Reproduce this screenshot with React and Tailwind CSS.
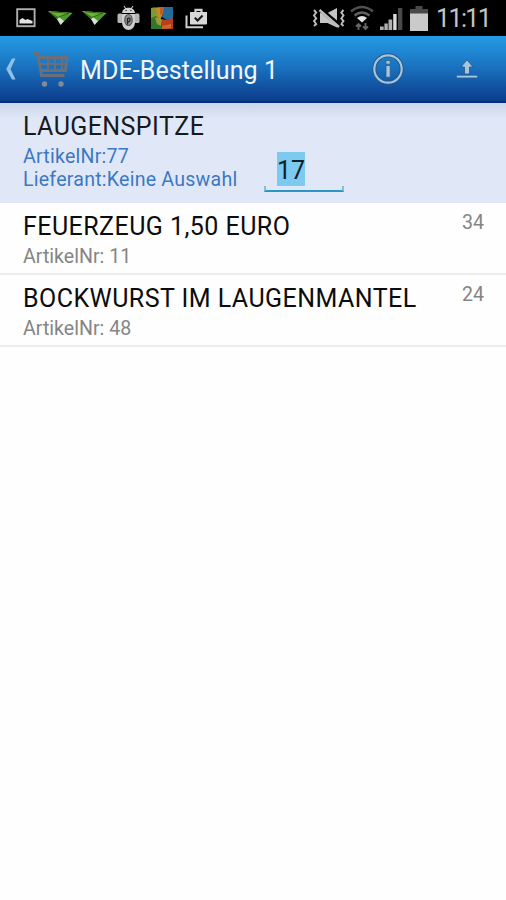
// src/App.jsx
import React, { useState } from 'react';

const ARTICLES = [
  { id: 77, name: 'LAUGENSPITZE', supplier: 'Keine Auswahl', amount: 17 },
  { id: 11, name: 'FEUERZEUG 1,50 EURO', amount: 34 },
  { id: 48, name: 'BOCKWURST IM LAUGENMANTEL', amount: 24 },
];

// --- Status bar icons ---
const ScreenshotIcon = () => (
  <svg width="20" height="20" viewBox="0 0 20 20">
    <rect x="1.2" y="1.2" width="17.4" height="17" fill="none" stroke="#b0b0b0" strokeWidth="1.9" />
    <path d="M3.500 15.500V12l3-2 3 2 2-1 5 2v2.500z" fill="#e2e2e2" />
  </svg>
);

const PlaneIcon = () => (
  <svg width="25" height="16" viewBox="0 0 25 16">
    <path d="M0 1 24.500 3 13 14.500 9.500 9.500z" fill="#4f9a2b" />
    <path d="M0 1 24.500 3 10 7z" fill="#69b336" />
    <path d="M0 1 10 7 9.500 9.500z" fill="#35731c" />
    <path d="m9 9 2.500-1.500 4.500 3.500-3.500 4z" fill="#d9dfd5" />
    <path d="M3 1.800 21 3.300 10.500 7" fill="none" stroke="#255414" strokeWidth=".8" />
  </svg>
);

const AndroidIcon = () => (
  <svg width="23" height="26" viewBox="0 0 23 26">
    <path d="m7 1 2 3m7-3-2 3" stroke="#bdbdbd" strokeWidth="1.200" />
    <path d="M5 8C5.500 1 17.500 1 18 8z" fill="#d0d0d0" />
    <rect x=".5" y="8.500" width="5" height="9.500" rx="1.500" fill="#b5b5b5" />
    <rect x="17.500" y="8.500" width="5" height="9.500" rx="1.500" fill="#b5b5b5" />
    <path d="M5 9h13v9q-1 7-6.500 7T5 18z" fill="#cdcdcd" />
    <ellipse cx="11.500" cy="15" rx="3.700" ry="5.500" fill="#8d8d8d" stroke="#555" strokeWidth="1.200" />
    <path d="M10.500 19.500v-6q3-1 2.500 1.500t-2.500 1.500" fill="none" stroke="#222" strokeWidth="1.200" />
    <path d="M8.500 5.500h1.200m3.600 0h1.200" stroke="#222" strokeWidth="1.200" />
  </svg>
);

const ShieldTileIcon = () => (
  <svg width="24" height="24" viewBox="0 0 24 24">
    <path d="M1 2 11 1l2 7-3 6-9-2z" fill="#c78a25" />
    <path d="m1 2 4-.5L8 8l-4 4-3-2z" fill="#7f9a35" />
    <path d="M13 1h10v12l-6 1-5-3 1-4z" fill="#236d9a" />
    <path d="m10 1 4 0-1 7-3 1z" fill="#c65a25" />
    <path d="m1 12 5-2 6 4-1 9H1z" fill="#35762f" />
    <path d="m5 12 4-1 3 3-1 6-4-2z" fill="#9a9d33" />
    <path d="m12 13 5 1 6-2v11H11z" fill="#ba3d20" />
    <path d="m12 20 9-2v4l-9 1z" fill="#cf6a26" />
  </svg>
);

const BagIcon = () => (
  <svg width="23" height="21" viewBox="0 0 23 21">
    <path d="M1.500 7.500v11.700H18" fill="none" stroke="#cfcfcf" strokeWidth="2" />
    <path d="M10.500 4V1.800h6V4" fill="none" stroke="#cfcfcf" strokeWidth="2.200" />
    <path d="M5 4h17v11.500q0 1-1 1H6q-1 0-1-1z" fill="#d8d8d8" />
    <path d="m9.800 9.800 2.800 2.700 5-5" fill="none" stroke="#171717" strokeWidth="2" />
  </svg>
);

const MuteIcon = () => (
  <svg width="34" height="20" viewBox="0 0 34 20" fill="none" stroke="#bdbdbd">
    <path d="m2 2 2.200 2.500L2 7.500l2.200 3L2 13l2.200 3-2.200 2" strokeWidth="1.900" />
    <path d="m31.500 2-2.200 2.500 2.200 3-2.200 3 2.200 2.500-2.200 3 2.200 2" strokeWidth="1.900" />
    <path d="M8 5h7.500L25 0v19.500L15.500 15H8z" fill="#c4c4c4" stroke="none" />
    <path d="m8.500 1.500 19 16" stroke="#000" strokeWidth="4.400" />
    <path d="m7.500 2 19.500 17" strokeWidth="2.400" />
  </svg>
);

const WifiIcon = () => (
  <svg width="24" height="26" viewBox="0 0 24 26" fill="none">
    <path d="M1 6.500q11-9 22 0" stroke="#505050" strokeWidth="2.600" />
    <path d="M4.500 10.500q7.500-6 15 0" stroke="#606060" strokeWidth="2.400" />
    <path d="M7 13q5-4 10 0L12 17.500z" fill="#e3e3e3" />
    <path d="M8.500 25v-6m-2.500 2.500L8.500 19l2.500 2.500M15.500 18v6m-2.500-2.500 2.500 2.500 2.500-2.500" stroke="#666" strokeWidth="1.900" />
  </svg>
);

const SignalIcon = () => (
  <svg width="24" height="23" viewBox="0 0 24 23">
    <path d="M1 18.500h3.700V22H1zM5.400 15.500h3.400V22H5.400zM9.500 11.500h3.700V22H9.500z" fill="#b0b0b0" />
    <path d="M14.200 6h3.400v16h-3.400z" fill="#dadada" />
    <path d="M19 0h4.300v22H19z" fill="#494949" />
  </svg>
);

const BatteryIcon = () => (
  <svg width="18" height="27" viewBox="0 0 18 27">
    <path d="M5.500 1h7v3H18v5H0V4h5.500z" fill="#494949" />
    <path d="M0 8.500h18V26H0z" fill="#cacaca" />
  </svg>
);

// --- Action bar icons ---
const BackIcon = () => (
  <svg width="12" height="22" viewBox="0 0 12 22">
    <path d="M7 .5h3.500L5.500 11l5 10.500H7L1.200 11z" fill="#8fc0e8" />
  </svg>
);

const CartIcon = () => (
  <svg width="36" height="36" viewBox="0 0 36 36" fill="none" stroke="#6c6e78" strokeWidth="2.800">
    <path d="M0 2.500h4.500L8.500 24.500H31.500M5.500 6.500H34L32.500 19.500H7.500" />
    <path d="M7 13H33M15 7v12M22 7v12M29 7v12" strokeWidth="2.200" />
    <circle cx="11.500" cy="33" r="2.700" fill="#858b96" stroke="none" />
    <circle cx="28" cy="33" r="2.700" fill="#858b96" stroke="none" />
  </svg>
);

const InfoIcon = () => (
  <svg width="32" height="32" viewBox="0 0 32 32">
    <circle cx="16" cy="16" r="13.700" fill="none" stroke="#24577f" strokeWidth="4" />
    <circle cx="16" cy="16" r="13.700" fill="none" stroke="#a3c5e0" strokeWidth="2.200" />
    <path d="M14 7.500h4.200v3.700H14zM14 12.500h4.200v11.700H14z" fill="#a3c5e0" stroke="#24577f" strokeWidth=".7" />
  </svg>
);

const UploadIcon = () => (
  <svg width="22" height="20" viewBox="0 0 22 20">
    <path d="M8.500 15V8H5L11 .8 17 8h-3.500v7z" fill="#a3c5e0" stroke="#24577f" strokeWidth=".8" />
    <path d="M.5 16.300h21v2.600H.5z" fill="#a3c5e0" stroke="#24577f" strokeWidth=".6" />
  </svg>
);

const NOTIFICATIONS = [ScreenshotIcon, PlaneIcon, PlaneIcon, AndroidIcon, ShieldTileIcon, BagIcon];

function StatusBar() {
  return (
    <div className="flex h-9 items-center justify-between bg-black pl-[9px] pr-4">
      <div className="flex">
        {NOTIFICATIONS.map((Icon, i) => (
          <span key={i} className="flex w-[34px] items-center justify-center">
            <Icon />
          </span>
        ))}
      </div>
      <div className="flex items-center">
        <MuteIcon />
        <span className="ml-1"><WifiIcon /></span>
        <span className="ml-[5px] mt-0.5"><SignalIcon /></span>
        <span className="ml-[7px]"><BatteryIcon /></span>
        <span className="ml-2 mt-0.5 w-[54px] whitespace-nowrap text-[25px] leading-9 tracking-[-1.6px] text-[#c4c4c4]">11:11</span>
      </div>
    </div>
  );
}

function ActionBar({ title }) {
  return (
    <header className="flex h-[67px] items-center border-b-2 border-[#052c80] bg-linear-to-b from-[#259ce6] via-[#1a70bd] to-[#0d3c8c] pl-[5px] pr-7">
      <BackIcon />
      <span className="ml-4"><CartIcon /></span>
      <h1 className="ml-[11px] mt-[5px] flex-1 whitespace-nowrap text-[25px] tracking-[0.1px] text-[#f0f6fd]">{title}</h1>
      <button className="mr-[52px]"><InfoIcon /></button>
      <button className="mt-px"><UploadIcon /></button>
    </header>
  );
}

function SelectedRow({ article }) {
  const [amount, setAmount] = useState(String(article.amount));

  return (
    <li className="flex h-[100px] bg-linear-to-b from-[#ccd6e6] via-[#e0e8f8] via-16% to-[#e0e8f8] pl-[23px]">
      <div className="w-[241px] whitespace-nowrap pt-[9px]">
        <h2 className="text-[25px] leading-[30px] tracking-[0.42px] text-[#17191d]">{article.name}</h2>
        <p className="mt-[3px] text-[19.6px] leading-[23px] tracking-[0.22px] text-[#3c78c4]">ArtikelNr:{article.id}</p>
        <p className="text-[19.6px] leading-[23px] tracking-[0.22px] text-[#3c78c4]">Lieferant:{article.supplier}</p>
      </div>
      <div className="mt-[49px] h-10 w-20">
        <label className="flex h-[34px] pl-[13px]">
          <input
            value={amount}
            onChange={(e) => setAmount(e.target.value)}
            className="h-[34px] w-7 bg-[#7dcaf0] pt-[3px] text-[25px] text-[#10202b] outline-none"
          />
        </label>
        <div className="h-[6px] border-x-2 border-b-2 border-x-[#86bddb] border-b-[#2997c5]" />
      </div>
    </li>
  );
}

function ArticleRow({ article }) {
  return (
    <li className="flex h-[72px] justify-between whitespace-nowrap border-b-2 border-[#ededed] pl-[23px] pr-[22px]">
      <div className="pt-[9px]">
        <h2 className="text-[25px] leading-[30px] tracking-[0.45px] text-[#0c0c0c]">{article.name}</h2>
        <p className="mt-[3px] text-[19.6px] leading-[23px] text-[#858585]">ArtikelNr: {article.id}</p>
      </div>
      <span className="pt-2 text-[19.6px] leading-[23px] text-[#858585]">{article.amount}</span>
    </li>
  );
}

function App() {
  const [selectedId] = useState(77);

  return (
    <div className="min-h-screen bg-[#fefefe] font-['Roboto',sans-serif]">
      <StatusBar />
      <ActionBar title="MDE-Bestellung 1" />
      <ul>
        {ARTICLES.map((article) =>
          article.id === selectedId ? (
            <SelectedRow key={article.id} article={article} />
          ) : (
            <ArticleRow key={article.id} article={article} />
          )
        )}
      </ul>
    </div>
  );
}

export default App;
